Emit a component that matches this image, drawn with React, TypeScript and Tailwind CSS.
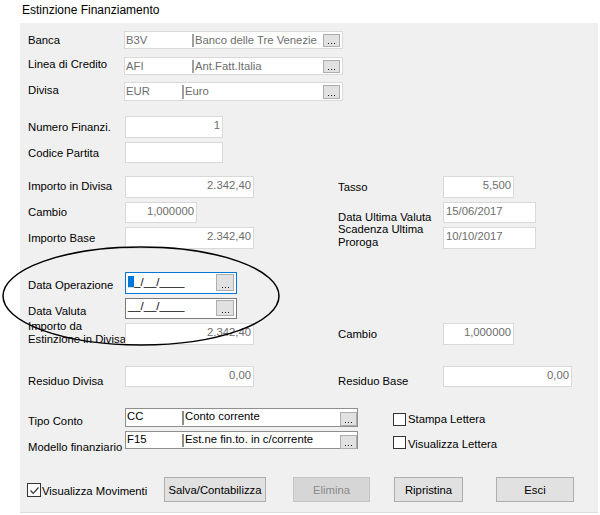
import clsx from 'clsx'

// "..." glyph drawn on the lookup buttons
function Dots() {
  return (
    <svg width="7" height="1" viewBox="0 0 7 1" className="block">
      <rect x="0" y="0" width="1" height="1" fill="#1a1a1a" />
      <rect x="3" y="0" width="1" height="1" fill="#1a1a1a" />
      <rect x="6" y="0" width="1" height="1" fill="#1a1a1a" />
    </svg>
  )
}

function PickButton({ className }: { className: string }) {
  return (
    <div className={clsx('flex shrink-0 items-end justify-center border border-[#adadad] bg-[#e1e1e1] pb-[2px]', className)}>
      <Dots />
    </div>
  )
}

function Check({ checked, className }: { checked?: boolean; className?: string }) {
  return (
    <div className={clsx('flex h-[13px] w-[13px] shrink-0 items-center justify-center border border-[#333333] bg-white', className)}>
      {checked && (
        <svg width="11" height="11" viewBox="0 0 11 11">
          <path d="M1.5 5.5 L4.2 8.3 L9.5 2.5" fill="none" stroke="#333333" strokeWidth="1.2" />
        </svg>
      )}
    </div>
  )
}

function Box({ w, h, value, left, className }: { w: string; h: string; value: string; left?: boolean; className?: string }) {
  return (
    <div
      className={clsx(
        'shrink-0 whitespace-nowrap border border-[#d9d9d9] bg-white pt-[2px] text-[#6d6d6d]',
        left ? 'pl-[2px] text-left' : 'pr-[2px] text-right',
        w,
        h,
        className,
      )}
    >
      {value}
    </div>
  )
}

function Btn({ label, w, disabled }: { label: string; w: string; disabled?: boolean }) {
  return (
    <div
      className={clsx(
        'flex h-[25px] shrink-0 items-center justify-center border pt-[1px]',
        disabled ? 'border-[#c4c4c4] bg-[#d6d6d6] text-[#8a8a8a]' : 'border-[#adadad] bg-[#e1e1e1] text-black',
        w,
      )}
    >
      {label}
    </div>
  )
}

export default function App() {
  return (
    <div className="relative h-[515px] w-[600px] overflow-hidden bg-white font-['Liberation_Sans',Arial,sans-serif] text-[11.3px] leading-[13px] text-black">
      <div className="h-[23px] pl-[22px] pt-[4px] text-[12px] leading-[13px]">Estinzione Finanziamento</div>

      <div className="ml-[20px] flex h-[490px] w-[578px] flex-col border-b border-[#dcdcdc] bg-[#f0f0f0] pl-[8px] pt-[8px]">
        {/* Banca */}
        <div className="flex h-[18px]">
          <div className="mt-[3px] w-[96px] shrink-0">Banca</div>
          <div className="flex h-[18px] w-[219px] border border-[#d9d9d9] bg-white text-[#6d6d6d]">
            <div className="w-[67px] shrink-0 pl-[1px] pt-[2px]">B3V</div>
            <div className="mb-[1px] mt-[2px] w-[2px] shrink-0 bg-[#a0a0a0]" />
            <div className="flex-1 overflow-hidden whitespace-nowrap pl-[1px] pt-[2px]">Banco delle Tre Venezie</div>
            <PickButton className="mr-[2px] mt-[2px] h-[13px] w-[17px]" />
          </div>
        </div>

        {/* Linea di Credito */}
        <div className="mt-[8px] flex h-[18px]">
          <div className="mt-[1px] w-[96px] shrink-0">Linea di Credito</div>
          <div className="flex h-[18px] w-[219px] border border-[#d9d9d9] bg-white text-[#6d6d6d]">
            <div className="w-[67px] shrink-0 pl-[1px] pt-[2px]">AFI</div>
            <div className="mb-[1px] mt-[2px] w-[2px] shrink-0 bg-[#a0a0a0]" />
            <div className="flex-1 overflow-hidden whitespace-nowrap pl-[1px] pt-[2px]">Ant.Fatt.Italia</div>
            <PickButton className="mr-[2px] mt-[2px] h-[13px] w-[17px]" />
          </div>
        </div>

        {/* Divisa */}
        <div className="mt-[7px] flex h-[19px]">
          <div className="mt-[2px] w-[96px] shrink-0">Divisa</div>
          <div className="flex h-[19px] w-[219px] border border-[#d9d9d9] bg-white text-[#6d6d6d]">
            <div className="w-[57px] shrink-0 pl-[1px] pt-[2px]">EUR</div>
            <div className="mb-[1px] mt-[2px] w-[2px] shrink-0 bg-[#a0a0a0]" />
            <div className="flex-1 overflow-hidden whitespace-nowrap pl-[1px] pt-[2px]">Euro</div>
            <PickButton className="mr-[2px] mt-[2px] h-[14px] w-[17px]" />
          </div>
        </div>

        {/* Numero Finanzi. */}
        <div className="mt-[15px] flex h-[22px]">
          <div className="mt-[5px] w-[97px] shrink-0">Numero Finanzi.</div>
          <Box w="w-[98px]" h="h-[22px]" value="1" />
        </div>

        {/* Codice Partita */}
        <div className="mt-[4px] flex h-[21px]">
          <div className="mt-[5px] w-[97px] shrink-0">Codice Partita</div>
          <Box w="w-[98px]" h="h-[21px]" value="" />
        </div>

        {/* Importo in Divisa / Tasso */}
        <div className="mt-[13px] flex h-[22px]">
          <div className="flex w-[310px] shrink-0">
            <div className="mt-[4px] w-[97px] shrink-0">Importo in Divisa</div>
            <Box w="w-[129px]" h="h-[22px]" value="2.342,40" />
          </div>
          <div className="mt-[5px] w-[105px] shrink-0">Tasso</div>
          <Box w="w-[71px]" h="h-[22px]" value="5,500" />
        </div>

        {/* Cambio / Data Ultima Valuta */}
        <div className="mt-[4px] flex h-[21px]">
          <div className="flex w-[310px] shrink-0">
            <div className="mt-[4px] w-[97px] shrink-0">Cambio</div>
            <Box w="w-[72px]" h="h-[21px]" value="1,000000" />
          </div>
          <div className="mt-[8.5px] w-[105px] shrink-0 whitespace-nowrap">Data Ultima Valuta</div>
          <Box w="w-[93px]" h="h-[21px]" value="15/06/2017" left />
        </div>

        {/* Importo Base / Scadenza Ultima Proroga */}
        <div className="mt-[4px] flex h-[22px]">
          <div className="flex w-[310px] shrink-0">
            <div className="mt-[5px] w-[97px] shrink-0">Importo Base</div>
            <Box w="w-[129px]" h="h-[22px]" value="2.342,40" />
          </div>
          <div className="mt-[-4px] w-[105px] shrink-0 leading-[12.5px]">
            Scadenza Ultima
            <br />
            Proroga
          </div>
          <Box w="w-[93px]" h="h-[22px]" value="10/10/2017" left />
        </div>

        {/* Data Operazione */}
        <div className="mt-[23px] flex h-[22px]">
          <div className="mt-[7px] w-[97px] shrink-0">Data Operazione</div>
          <div className="flex h-[22px] w-[112px] border border-[#0078d7] bg-white">
            <div className="flex-1 whitespace-nowrap pl-[2px] pt-[3px]">
              <span className="bg-[#0078d7] text-white">_</span>_/__/____
            </div>
            <PickButton className="mr-[2px] mt-[1px] h-[17px] w-[18px]" />
          </div>
        </div>

        {/* Data Valuta */}
        <div className="mt-[4px] flex h-[21px]">
          <div className="mt-[7px] w-[97px] shrink-0">Data Valuta</div>
          <div className="flex h-[21px] w-[112px] border border-[#7a7a7a] bg-white">
            <div className="flex-1 whitespace-nowrap pl-[2px] pt-[1px]">__/__/____</div>
            <PickButton className="mr-[2px] mt-[1px] h-[16px] w-[18px]" />
          </div>
        </div>

        {/* Importo da Estinzione in Divisa / Cambio */}
        <div className="mt-[4px] flex h-[22px]">
          <div className="flex w-[310px] shrink-0">
            <div className="mt-[-3px] w-[97px] shrink-0 whitespace-nowrap leading-[13.3px]">
              Importo da
              <br />
              Estinzione in Divisa
            </div>
            <Box w="w-[129px]" h="h-[22px]" value="2.342,40" />
          </div>
          <div className="mt-[5px] w-[105px] shrink-0">Cambio</div>
          <Box w="w-[71px]" h="h-[22px]" value="1,000000" />
        </div>

        {/* Residuo Divisa / Residuo Base */}
        <div className="mt-[21px] flex h-[21px]">
          <div className="flex w-[310px] shrink-0">
            <div className="mt-[8.5px] w-[97px] shrink-0">Residuo Divisa</div>
            <Box w="w-[129px]" h="h-[21px]" value="0,00" />
          </div>
          <div className="mt-[8.5px] w-[105px] shrink-0">Residuo Base</div>
          <Box w="w-[129px]" h="h-[21px]" value="0,00" />
        </div>

        {/* Tipo Conto / Stampa Lettera */}
        <div className="mt-[21px] flex h-[19px]">
          <div className="mt-[7px] w-[97px] shrink-0">Tipo Conto</div>
          <div className="flex h-[19px] w-[233px] shrink-0 border border-[#8f8f8f] bg-white">
            <div className="w-[56px] shrink-0 pl-[1px] pt-[1px]">CC</div>
            <div className="mb-[1px] mt-[2px] w-[2px] shrink-0 bg-[#8c8c8c]" />
            <div className="flex-1 overflow-hidden whitespace-nowrap pl-[1px] pt-[1px]">Conto corrente</div>
            <PickButton className="mt-[3px] h-[14px] w-[17px]" />
          </div>
          <Check className="ml-[35px] mt-[5px]" />
          <div className="ml-[2px] mt-[4.5px]">Stampa Lettera</div>
        </div>

        {/* Modello finanziario / Visualizza Lettera */}
        <div className="mt-[4px] flex h-[18px]">
          <div className="mt-[10px] w-[97px] shrink-0 whitespace-nowrap">Modello finanziario</div>
          <div className="flex h-[18px] w-[233px] shrink-0 border border-[#8f8f8f] bg-white">
            <div className="w-[56px] shrink-0 pl-[1px] pt-[1px]">F15</div>
            <div className="mb-[1px] mt-[2px] w-[2px] shrink-0 bg-[#8c8c8c]" />
            <div className="flex-1 overflow-hidden whitespace-nowrap pl-[1px] pt-[1px]">Est.ne fin.to. in c/corrente</div>
            <PickButton className="mt-[3px] h-[14px] w-[17px]" />
          </div>
          <Check className="ml-[35px] mt-[5px]" />
          <div className="ml-[2px] mt-[7px]">Visualizza Lettera</div>
        </div>

        {/* Buttons */}
        <div className="mt-[28px] flex h-[25px]">
          <div className="ml-[-1px] flex w-[137px] shrink-0 items-start">
            <Check checked className="mt-[6px] h-[14px] w-[14px]" />
            <div className="ml-[1px] mt-[8px] whitespace-nowrap">Visualizza Movimenti</div>
          </div>
          <Btn label="Salva/Contabilizza" w="w-[102px]" />
          <div className="w-[27px] shrink-0" />
          <Btn label="Elimina" w="w-[77px]" disabled />
          <div className="w-[24px] shrink-0" />
          <Btn label="Ripristina" w="w-[69px]" />
          <div className="w-[33px] shrink-0" />
          <Btn label="Esci" w="w-[78px]" />
        </div>
      </div>

      {/* hand-drawn highlight ellipse */}
      <svg className="pointer-events-none absolute left-0 top-0" width="600" height="515" viewBox="0 0 600 515">
        <ellipse cx="141" cy="296" rx="138" ry="49" fill="none" stroke="#000" strokeWidth="1.5" />
      </svg>
    </div>
  )
}
